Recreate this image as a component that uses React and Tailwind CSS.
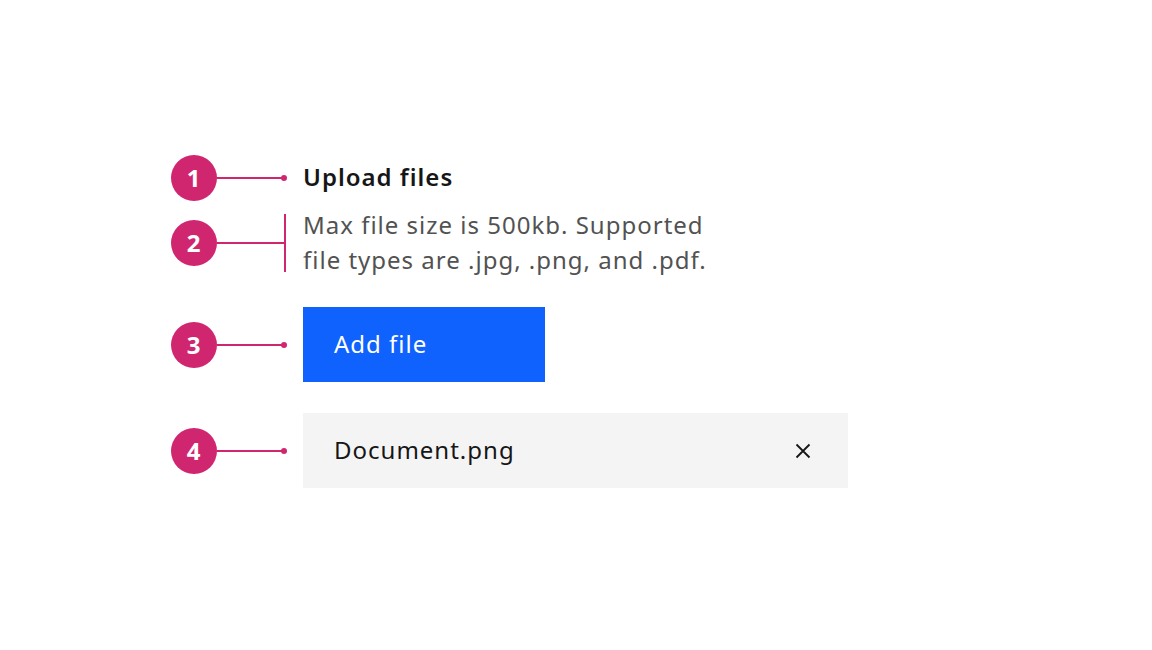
import React from 'react';

const Marker = ({ n, bracket }) => (
  <div className="flex items-center w-[132px] shrink-0">
    <div className="w-[46px] h-[46px] rounded-full bg-[#d02670] flex items-center justify-center text-white text-[24px] font-bold leading-none">
      {n}
    </div>
    <div className="w-[67px] h-[2px] bg-[#d02670]" />
    {bracket ? (
      <div className="w-[2px] h-[58px] bg-[#d02670]" />
    ) : (
      <div className="w-[6px] h-[6px] -ml-[3px] rounded-full bg-[#d02670]" />
    )}
  </div>
);

const App = () => {
  return (
    <div className="w-[1152px] h-[650px] bg-white font-['Noto_Sans',sans-serif] tracking-[1px]">
      <div className="pt-[155px] pl-[171px] flex flex-col">
        <div className="flex items-center h-[46px]">
          <Marker n="1" />
          <h1 className="text-[24px] font-semibold text-[#161616] leading-none -mt-[2px]">Upload files</h1>
        </div>

        <div className="flex items-center mt-[7px] h-[70px]">
          <Marker n="2" bracket />
          <p className="text-[24px] text-[#525252] leading-[35px] -mt-[3px]">
            Max file size is 500kb. Supported
            <br />
            file types are .jpg, .png, and .pdf.
          </p>
        </div>

        <div className="flex items-center mt-[29px]">
          <Marker n="3" />
          <button className="w-[242px] h-[75px] bg-[#0f62fe] text-white text-[24px] text-left pl-[31px] pb-[2px]">
            Add file
          </button>
        </div>

        <div className="flex items-center mt-[31px]">
          <Marker n="4" />
          <div className="w-[545px] h-[75px] bg-[#f4f4f4] flex items-center justify-between pl-[31px] pr-[37px]">
            <span className="text-[24px] text-[#161616] -mt-[2px]">Document.png</span>
            <svg width="16" height="16" viewBox="0 0 16 16" fill="none" stroke="#161616" strokeWidth="1.8">
              <path d="M1.5 1.5 L14.5 14.5 M14.5 1.5 L1.5 14.5" />
            </svg>
          </div>
        </div>
      </div>
    </div>
  );
};

export default App;
